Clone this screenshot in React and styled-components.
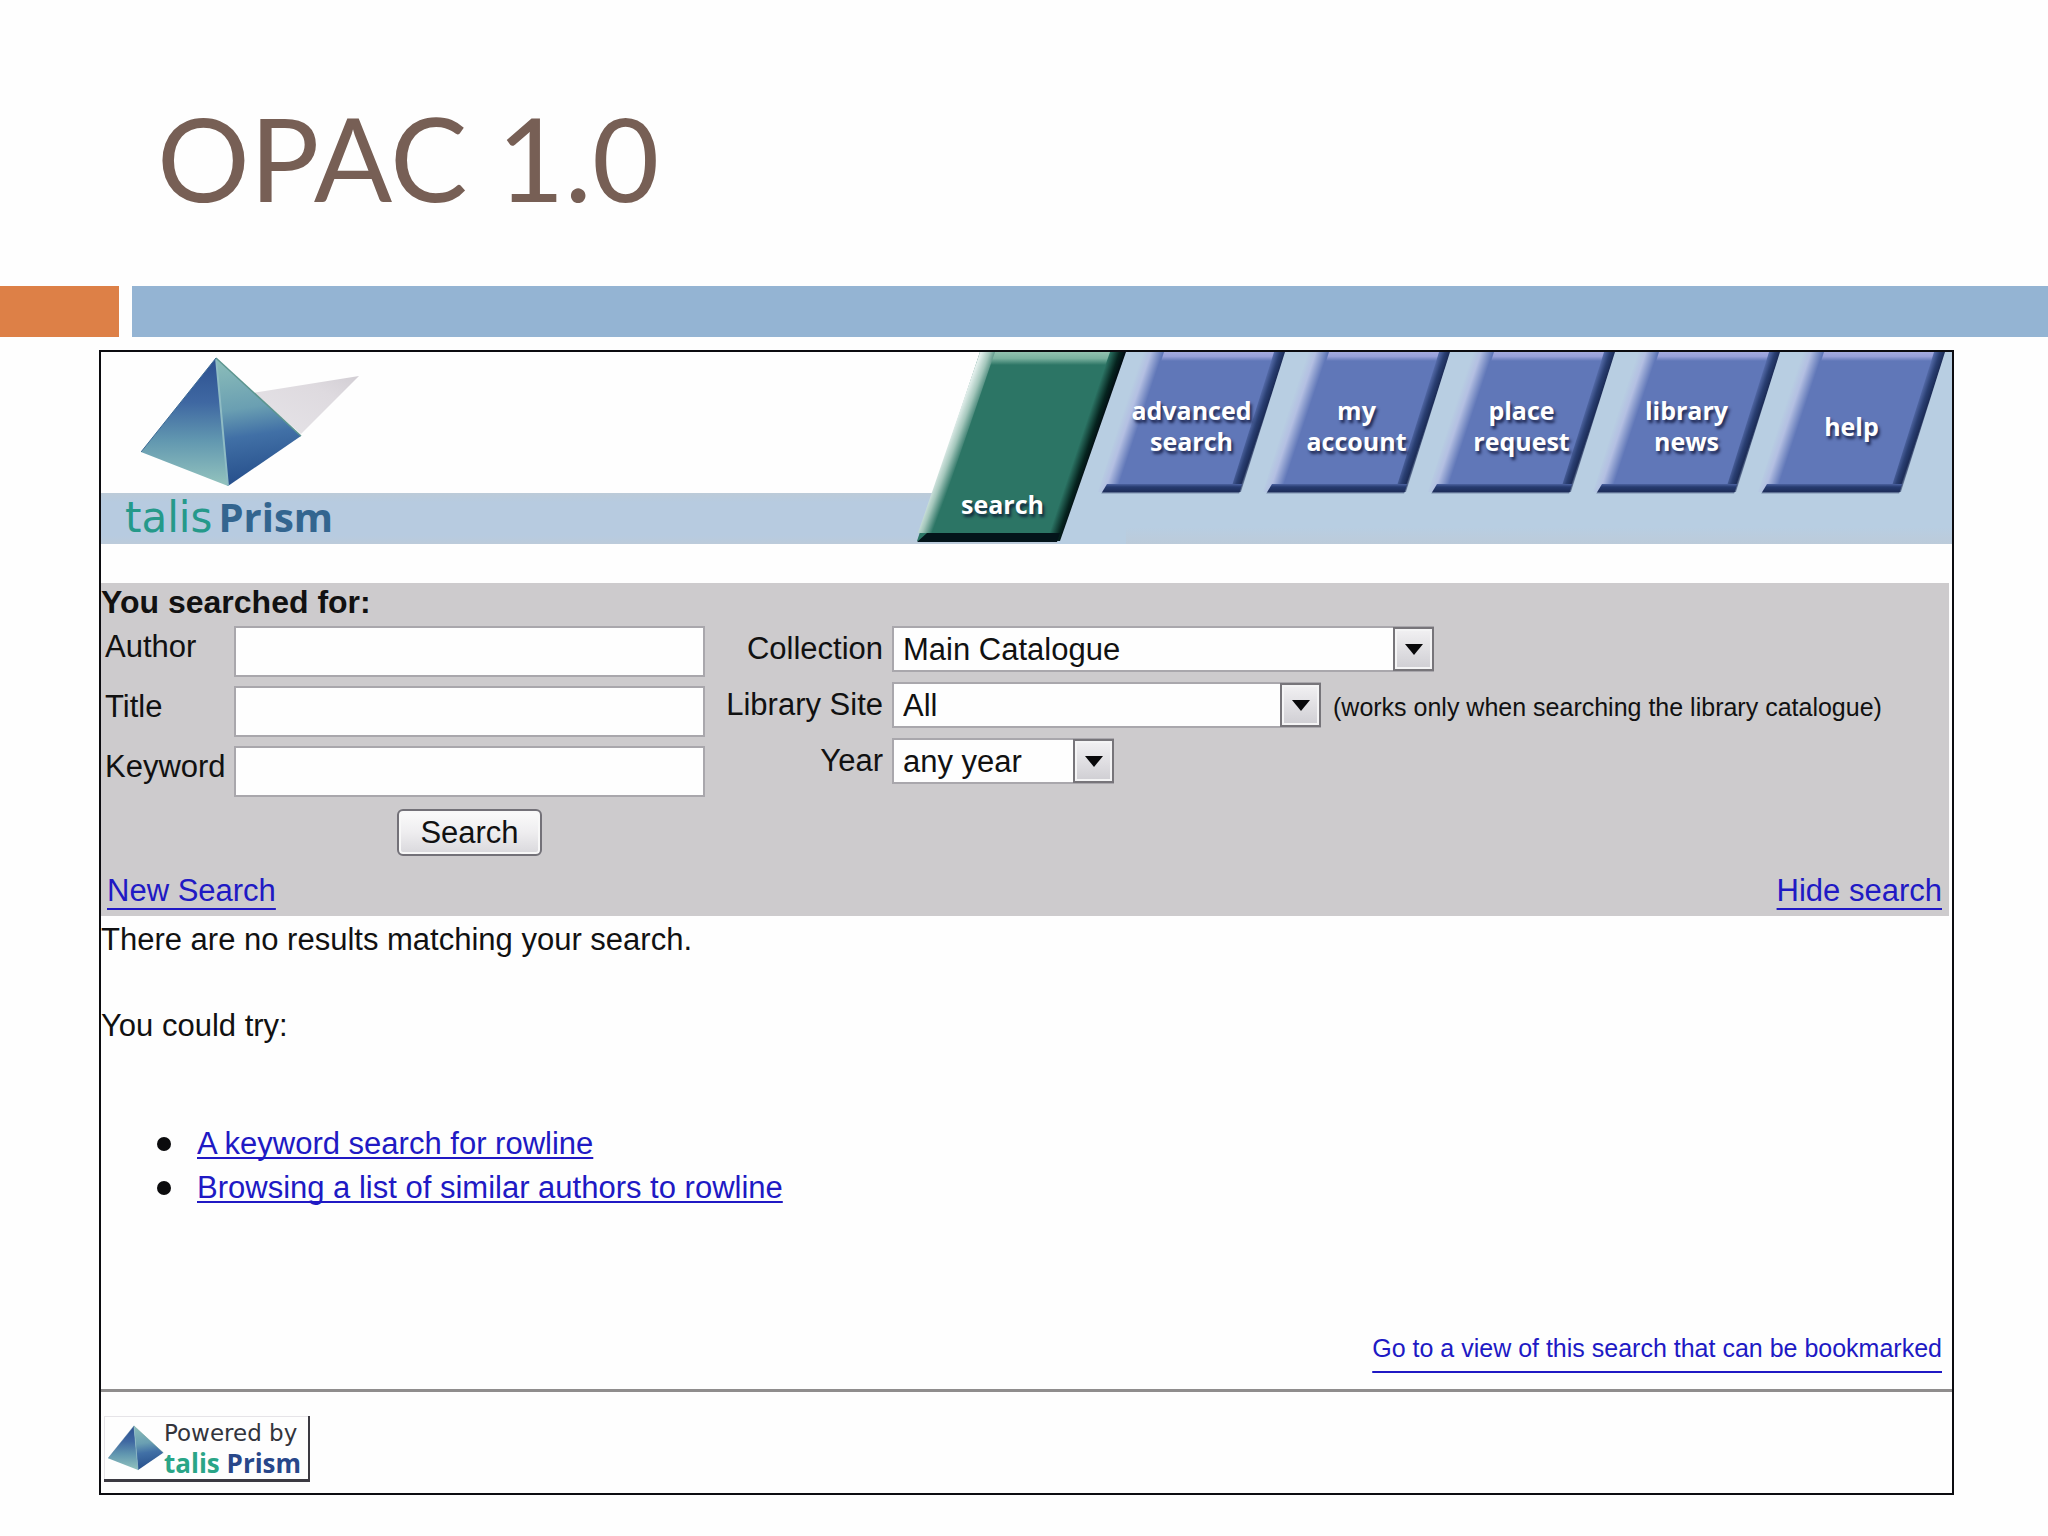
import React from "react";
import styled, { createGlobalStyle } from "styled-components";

const GlobalStyle = createGlobalStyle`
  *, *::before, *::after { box-sizing: border-box; }
  body {
    margin: 0;
    background: #fefefe;
    color: #111;
    font-family: "Liberation Sans", Arial, sans-serif;
    font-size: 31px;
  }
`;

const SlideHeader = styled.header`
  padding: 88px 64px 58px 157px;
`;

const SlideTitle = styled.h1`
  margin: 0;
  color: #775f55;
  font: 400 116px/140px Lato, sans-serif;
`;

const Stripe = styled.div`
  display: flex;
  gap: 13px;
  height: 51px;
`;

const StripeAccent = styled.div`
  width: 119px;
  background: #dd8047;
`;

const StripeMain = styled.div`
  flex: 1;
  background: #94b4d3;
`;

const Frame = styled.main`
  margin: 13px 94px 42px 99px;
  border: 2px solid #0c0c10;
`;

const Banner = styled.header`
  display: flex;
  justify-content: space-between;
  height: 192px;
  background: linear-gradient(#fefefe 141px, #bccbd8 141px, #b7cbe0 150px, #b7cbe0 184px, #bccbda 192px);
`;

const Brand = styled.div`
  display: flex;
  flex-direction: column;
  padding: 4px 0 0 24px;
`;

const BrandMark = styled.svg`
  display: block;
  flex: none;
  width: 220px;
  height: 132px;
  margin-left: 16px;
`;

const BrandName = styled.div`
  font: 400 42px/58px "DejaVu Sans", sans-serif;
  color: #25998a;

  strong {
    margin-left: 6px;
    font-family: "Open Sans", sans-serif;
    font-size: 40px;
    font-weight: 700;
    color: #33658f;
  }
`;

const Tabs = styled.nav`
  display: flex;
`;

const Tab = styled.a`
  position: relative;
  display: flex;
  flex-direction: column;
  justify-content: ${(p) => (p.$active ? "flex-end" : "center")};
  align-items: center;
  width: ${(p) => (p.$active ? 183 : 165)}px;
  height: ${(p) => (p.$active ? 192 : 148)}px;
  padding: ${(p) => (p.$active ? "0 12px 24px 0" : "0")};
  color: #fff;
  font: 700 25px/31px "Open Sans", sans-serif;
  text-align: center;
  text-decoration: none;
  text-shadow: 2px 3px 3px rgba(10, 15, 50, 0.75);
`;

const TabSlot = styled.div`
  height: 192px;
  background: ${(p) => (p.$active ? "transparent" : "linear-gradient(#b8cee2 175px, #bccbda)")};

  &:last-child { padding-right: 27px; }
`;

const TabShape = styled.svg`
  position: absolute;
  top: 0;
  left: 0;
  overflow: visible;
`;

const TabLabel = styled.span`
  position: relative;
  width: ${(p) => (p.$active ? "auto" : "147px")};
  margin-left: ${(p) => (p.$active ? "0" : "18px")};
`;

const SearchPanel = styled.form`
  margin: 39px 3px 0 0;
  padding-bottom: 5px;
  background: #cdcbcd;
`;

const PanelTitle = styled.h2`
  margin: 0;
  font-size: 32px;
  line-height: 38px;
`;

const Criteria = styled.div`
  display: flex;
  padding: 5px 0 0 4px;
`;

const Fields = styled.div`
  display: grid;
  grid-template-columns: 129px 471px;
  row-gap: 9px;
`;

const FieldLabel = styled.label`
  line-height: 42px;
`;

const TextBox = styled.input`
  height: 51px;
  padding: 0 8px;
  border: 2px solid #a9a7ac;
  border-radius: 0;
  background: #fefefe;
  font: inherit;
`;

const SearchButton = styled.button`
  grid-column: 2;
  justify-self: center;
  width: 145px;
  height: 47px;
  margin-top: 3px;
  padding: 0;
  border: 2px solid #737178;
  border-radius: 6px;
  background: linear-gradient(#fbfbfb, #eeedef 50%, #d9d8dc);
  box-shadow: inset 0 0 0 2px #f8f8f8;
  color: #111;
  font: inherit;
`;

const Filters = styled.div`
  display: grid;
  grid-template-columns: 178px auto;
  align-content: start;
  gap: 10px 9px;
`;

const FilterLabel = styled.label`
  line-height: 46px;
  text-align: right;
`;

const FilterControl = styled.div`
  display: flex;
  align-items: baseline;
  gap: 12px;
`;

const SelectBox = styled.div`
  position: relative;
  width: ${(p) => p.$width}px;
`;

const Select = styled.select`
  appearance: none;
  display: block;
  width: 100%;
  height: 46px;
  padding: 0 44px 0 9px;
  border: 2px solid #a9a7ac;
  border-radius: 0;
  background: #fefefe;
  color: #111;
  font: inherit;
`;

const SelectArrow = styled.span`
  position: absolute;
  inset: 1px 0 1px auto;
  display: grid;
  place-items: center;
  width: 41px;
  border: 2px solid #77757a;
  background: linear-gradient(#f2f1f3, #cfced3);
  box-shadow: inset 0 0 0 2px #f4f4f5;
  pointer-events: none;
`;

const Note = styled.span`
  font-size: 25px;
`;

const Link = styled.a`
  color: #2019c4;
  font-size: ${(p) => (p.$small ? 25 : 31)}px;
  text-decoration: underline 2px;
  text-decoration-skip-ink: none;
  text-underline-offset: ${(p) => p.$offset}px;
`;

const PanelLinks = styled.div`
  display: flex;
  justify-content: space-between;
  margin-top: 15px;
  padding: 0 7px 0 6px;
  line-height: 40px;
`;

const Results = styled.section`
  padding-top: 2px;
  line-height: 44px;
`;

const Message = styled.p`
  margin: 0 0 42px;
`;

const Suggestions = styled.ul`
  margin: 74px 0 115px;
  padding: 0 0 0 56px;
  list-style: none;
`;

const Suggestion = styled.li`
  display: flex;
  align-items: center;
  gap: 26px;

  &::before {
    content: "";
    width: 14px;
    height: 14px;
    border-radius: 50%;
    background: #0b0b0d;
  }
`;

const BookmarkRow = styled.div`
  padding-right: 10px;
  text-align: right;
`;

const Footer = styled.footer`
  margin-top: 19px;
  padding: 24px 3px 11px;
  border-top: 3px solid #8f8d8d;
`;

const Badge = styled.a`
  display: inline-flex;
  align-items: center;
  width: 206px;
  height: 66px;
  padding-left: 4px;
  border: solid #3c3a42;
  border-width: 0 2px 3px 0;
  box-shadow: inset 1px 1px 0 #e6e4e8;
  color: #33343c;
  font: 400 23px/30px "DejaVu Sans", sans-serif;
  text-decoration: none;
  vertical-align: top;
`;

const BadgeText = styled.span`
  display: flex;
  flex-direction: column;
  white-space: nowrap;
`;

const BadgeName = styled.strong`
  color: #28478a;
  font-family: "Open Sans", sans-serif;
  font-size: 26px;

  em {
    color: #2aa587;
    font-style: normal;
  }
`;

function Pyramid({ id }) {
  return (
    <>
      <defs>
        <linearGradient id={id + "l"} x1="0.5" y1="0" x2="0.5" y2="1">
          <stop offset="0" stopColor="#2c5090" />
          <stop offset="0.35" stopColor="#3f68a2" />
          <stop offset="0.65" stopColor="#6298b0" />
          <stop offset="1" stopColor="#94c4be" />
        </linearGradient>
        <linearGradient id={id + "r"} x1="0.4" y1="0" x2="0.5" y2="1">
          <stop offset="0" stopColor="#8abcb9" />
          <stop offset="0.38" stopColor="#6a9fb2" />
          <stop offset="0.6" stopColor="#4170a6" />
          <stop offset="1" stopColor="#244c89" />
        </linearGradient>
      </defs>
      <path d="M75 2 L0 96 L87 130 Z" fill={`url(#${id}l)`} />
      <path d="M75 2 L160 80 L87 130 Z" fill={`url(#${id}r)`} />
      <path d="M75 2 L87 130" stroke="#8fbcc4" strokeWidth="2" />
      <path d="M75 2 L160 80" stroke="#5c958f" strokeWidth="1.5" />
      <path d="M75 2 L0 96" stroke="#3d6a94" strokeWidth="1" />
    </>
  );
}

function ActiveShape() {
  return (
    <TabShape width="209" height="192" viewBox="0 0 209 192" aria-hidden="true">
      <defs>
        <linearGradient id="greenEdge" gradientUnits="userSpaceOnUse" x1="30" y1="92" x2="46" y2="98">
          <stop offset="0" stopColor="#e3efec" />
          <stop offset="0.45" stopColor="#a3c6bb" />
          <stop offset="1" stopColor="#2c7565" />
        </linearGradient>
        <linearGradient id="greenTop" x1="0" y1="0" x2="0" y2="1">
          <stop offset="0" stopColor="#93c2b0" />
          <stop offset="0.5" stopColor="#79b09e" />
          <stop offset="1" stopColor="#2c7565" />
        </linearGradient>
        <linearGradient id="greenSide" gradientUnits="userSpaceOnUse" x1="162" y1="92" x2="180" y2="98">
          <stop offset="0" stopColor="#2c7565" />
          <stop offset="0.5" stopColor="#06241f" />
          <stop offset="0.8" stopColor="#020b12" />
          <stop offset="1" stopColor="#8fa3b5" />
        </linearGradient>
      </defs>
      <path d="M205 0 H209 V192 H140 Z" fill="#b8cee2" />
      <path d="M63 0 H208 L142 189 H0 Z" fill="#2c7565" />
      <path d="M63 0 H208 L204 13 H59 Z" fill="url(#greenTop)" />
      <path d="M63 0 H78 L16 181 H1 Z" fill="url(#greenEdge)" />
      <path d="M193 0 H209 L143 189 H127 Z" fill="url(#greenSide)" />
      <path d="M10 181 H143 L140 190 H0 Z" fill="#03141a" />
    </TabShape>
  );
}

function BlueShape() {
  return (
    <TabShape width="185" height="146" viewBox="0 0 185 146" aria-hidden="true">
      <defs>
        <linearGradient id="blueEdge" gradientUnits="userSpaceOnUse" x1="20" y1="69" x2="38" y2="75">
          <stop offset="0" stopColor="#b8cee2" />
          <stop offset="0.4" stopColor="#b3bfe2" />
          <stop offset="1" stopColor="#6077b8" />
        </linearGradient>
        <linearGradient id="blueTop" x1="0" y1="0" x2="0" y2="1">
          <stop offset="0" stopColor="#a5abe0" />
          <stop offset="0.5" stopColor="#969fd8" />
          <stop offset="1" stopColor="#6077b8" />
        </linearGradient>
        <linearGradient id="blueSide" gradientUnits="userSpaceOnUse" x1="150" y1="68" x2="165" y2="73">
          <stop offset="0" stopColor="#6077b8" />
          <stop offset="0.45" stopColor="#2a3f72" />
          <stop offset="0.75" stopColor="#1c2c57" />
          <stop offset="1" stopColor="#b8cee2" />
        </linearGradient>
        <linearGradient id="blueBase" x1="0" y1="0" x2="0" y2="1">
          <stop offset="0" stopColor="#4c62a0" />
          <stop offset="0.3" stopColor="#263b70" />
          <stop offset="0.75" stopColor="#1e2e5b" />
          <stop offset="1" stopColor="#b8cee2" />
        </linearGradient>
      </defs>
      <path d="M46 0 H184 L140 140 H2 Z" fill="#6077b8" />
      <path d="M54 0 H184 L181 9 H51 Z" fill="url(#blueTop)" />
      <path d="M42 0 H64 L20 140 H-2 Z" fill="url(#blueEdge)" />
      <path d="M174 0 H185 L141 140 H130 Z" fill="url(#blueSide)" />
      <path d="M7 132 H142 L139 142 H1 Z" fill="url(#blueBase)" />
    </TabShape>
  );
}

const tabs = [
  { lines: ["search"], active: true },
  { lines: ["advanced", "search"] },
  { lines: ["my", "account"] },
  { lines: ["place", "request"] },
  { lines: ["library", "news"] },
  { lines: ["help"] },
];

const fields = ["Author", "Title", "Keyword"];

const filters = [
  { id: "collection", label: "Collection", value: "Main Catalogue", width: 542 },
  {
    id: "site",
    label: "Library Site",
    value: "All",
    width: 429,
    note: "(works only when searching the library catalogue)",
  },
  { id: "year", label: "Year", value: "any year", width: 222 },
];

export default function App() {
  return (
    <>
      <GlobalStyle />
      <SlideHeader>
        <SlideTitle>OPAC 1.0</SlideTitle>
      </SlideHeader>
      <Stripe>
        <StripeAccent />
        <StripeMain />
      </Stripe>

      <Frame>
        <Banner>
          <Brand>
            <BrandMark viewBox="0 0 220 132" aria-hidden="true">
              <defs>
                <linearGradient id="shade" x1="0" y1="1" x2="1" y2="0">
                  <stop offset="0" stopColor="#e6e4e8" />
                  <stop offset="0.7" stopColor="#dedadf" />
                  <stop offset="1" stopColor="#d2ced4" />
                </linearGradient>
              </defs>
              <path d="M112 37 L218 20 L160 78 Z" fill="url(#shade)" />
              <Pyramid id="brand" />
            </BrandMark>
            <BrandName>
              talis<strong>Prism</strong>
            </BrandName>
          </Brand>
          <Tabs aria-label="Main">
            {tabs.map((tab) => (
              <TabSlot key={tab.lines.join(" ")} $active={tab.active}>
                <Tab href="#" $active={tab.active}>
                  {tab.active ? <ActiveShape /> : <BlueShape />}
                  {tab.lines.map((line) => (
                    <TabLabel key={line} $active={tab.active}>
                      {line}
                    </TabLabel>
                  ))}
                </Tab>
              </TabSlot>
            ))}
          </Tabs>
        </Banner>

        <SearchPanel onSubmit={(e) => e.preventDefault()}>
          <PanelTitle>You searched for:</PanelTitle>
          <Criteria>
            <Fields>
              {fields.map((name) => (
                <React.Fragment key={name}>
                  <FieldLabel htmlFor={name}>{name}</FieldLabel>
                  <TextBox id={name} type="text" />
                </React.Fragment>
              ))}
              <SearchButton type="submit">Search</SearchButton>
            </Fields>
            <Filters>
              {filters.map((f) => (
                <React.Fragment key={f.id}>
                  <FilterLabel htmlFor={f.id}>{f.label}</FilterLabel>
                  <FilterControl>
                    <SelectBox $width={f.width}>
                      <Select id={f.id}>
                        <option>{f.value}</option>
                      </Select>
                      <SelectArrow>
                        <svg width="18" height="11" viewBox="0 0 18 11" aria-hidden="true">
                          <path d="M0 0 H18 L9 11 Z" fill="#08080a" />
                        </svg>
                      </SelectArrow>
                    </SelectBox>
                    {f.note && <Note>{f.note}</Note>}
                  </FilterControl>
                </React.Fragment>
              ))}
            </Filters>
          </Criteria>
          <PanelLinks>
            <Link href="#" $offset={7}>New Search</Link>
            <Link href="#" $offset={7}>Hide search</Link>
          </PanelLinks>
        </SearchPanel>

        <Results>
          <Message>There are no results matching your search.</Message>
          <Message>You could try:</Message>
          <Suggestions>
            <Suggestion>
              <Link href="#" $offset={3}>A keyword search for rowline</Link>
            </Suggestion>
            <Suggestion>
              <Link href="#" $offset={3}>Browsing a list of similar authors to rowline</Link>
            </Suggestion>
          </Suggestions>
          <BookmarkRow>
            <Link href="#" $small $offset={14}>
              Go to a view of this search that can be bookmarked
            </Link>
          </BookmarkRow>
        </Results>

        <Footer>
          <Badge href="#">
            <svg width="56" height="46" viewBox="0 0 162 132" aria-hidden="true">
              <Pyramid id="badge" />
            </svg>
            <BadgeText>
              <span>Powered by</span>
              <BadgeName>
                <em>talis</em> Prism
              </BadgeName>
            </BadgeText>
          </Badge>
        </Footer>
      </Frame>
    </>
  );
}
